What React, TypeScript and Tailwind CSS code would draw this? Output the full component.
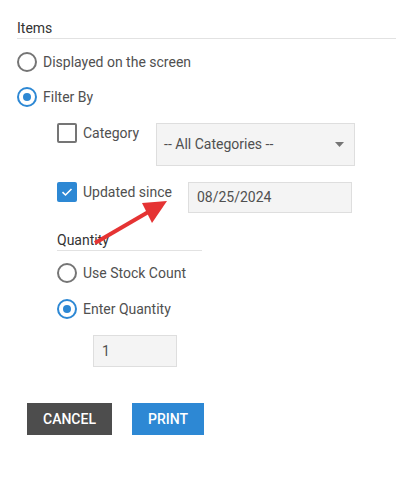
import { useState } from 'react';

function Radio({ checked }: { checked: boolean }) {
  return (
    <span
      className={`flex h-5 w-5 shrink-0 items-center justify-center rounded-full border-2 ${
        checked ? 'border-[#2d88d4]' : 'border-[#757575]'
      }`}
    >
      {checked && <span className="h-2 w-2 rounded-full bg-[#2d88d4]" />}
    </span>
  );
}

function Checkbox({ checked }: { checked: boolean }) {
  return checked ? (
    <span className="flex h-5 w-5 shrink-0 items-center justify-center rounded-[2px] bg-[#2d88d4]">
      <svg width="12" height="10" viewBox="0 0 12 10" fill="none">
        <path d="M1.5 5.2 L4.5 8 L10.5 2" stroke="white" strokeWidth="1.6" />
      </svg>
    </span>
  ) : (
    <span className="h-5 w-5 shrink-0 rounded-[2px] border-2 border-[#757575]" />
  );
}

export default function App() {
  const [mode, setMode] = useState<'screen' | 'filter'>('filter');
  const [qtyMode, setQtyMode] = useState<'stock' | 'enter'>('enter');

  return (
    <div className="relative h-[482px] w-[396px] bg-white pl-[17px] pt-[19px] font-['Roboto',sans-serif] text-[14px] text-[#505050]">
      <div className="border-b border-[#e2e2e2] pb-[1px] leading-[18px] text-[#333]">Items</div>

      <label className="mt-[13px] flex h-5 cursor-pointer items-center gap-[6px]" onClick={() => setMode('screen')}>
        <Radio checked={mode === 'screen'} />
        <span>Displayed on the screen</span>
      </label>
      <label className="mt-[15px] flex h-5 cursor-pointer items-center gap-[6px]" onClick={() => setMode('filter')}>
        <Radio checked={mode === 'filter'} />
        <span>Filter By</span>
      </label>

      <div className="pl-10">
        <div className="mt-4 flex items-start">
          <div className="flex h-5 items-center gap-[6px]">
            <Checkbox checked={false} />
            <span>Category</span>
          </div>
          <div className="ml-[17px] flex h-[43px] w-[199px] items-center justify-between border border-[#dedede] bg-[#f4f4f4] pl-[7px] pr-[10px]">
            <span>-- All Categories --</span>
            <svg width="9" height="5" viewBox="0 0 9 5">
              <path d="M0 0 H9 L4.5 5 Z" fill="#757575" />
            </svg>
          </div>
        </div>

        <div className="mt-4 flex items-start">
          <div className="flex h-5 items-center gap-[6px]">
            <Checkbox checked />
            <span>Updated since</span>
          </div>
          <div className="ml-4 flex h-[31px] w-[164px] items-center border border-[#dedede] bg-[#f4f4f4] pl-[8px]">
            08/25/2024
          </div>
        </div>

        <div className="mt-[18px] w-[145px] border-b border-[#e2e2e2] pb-[1px] leading-[18px] text-[#333]">
          Quantity
        </div>

        <label className="mt-3 flex h-5 cursor-pointer items-center gap-[6px]" onClick={() => setQtyMode('stock')}>
          <Radio checked={qtyMode === 'stock'} />
          <span>Use Stock Count</span>
        </label>
        <label className="mt-4 flex h-5 cursor-pointer items-center gap-[6px]" onClick={() => setQtyMode('enter')}>
          <Radio checked={qtyMode === 'enter'} />
          <span>Enter Quantity</span>
        </label>

        <div className="ml-9 mt-4 flex h-8 w-[84px] items-center border border-[#dedede] bg-[#f4f4f4] pl-[8px]">1</div>
      </div>

      <div className="ml-[10px] mt-9 flex gap-5">
        <button className="h-8 w-[85px] bg-[#4d4d4d] text-[14px] font-medium text-white">CANCEL</button>
        <button className="h-8 w-[72px] bg-[#2d88d4] text-[14px] font-medium text-white">PRINT</button>
      </div>

      <svg className="pointer-events-none absolute left-0 top-0" width="396" height="482">
        <line x1="95" y1="243" x2="150" y2="211" stroke="#e53333" strokeWidth="4" />
        <path d="M167 201 L142 203 L152 223 Z" fill="#e53333" />
      </svg>
    </div>
  );
}
